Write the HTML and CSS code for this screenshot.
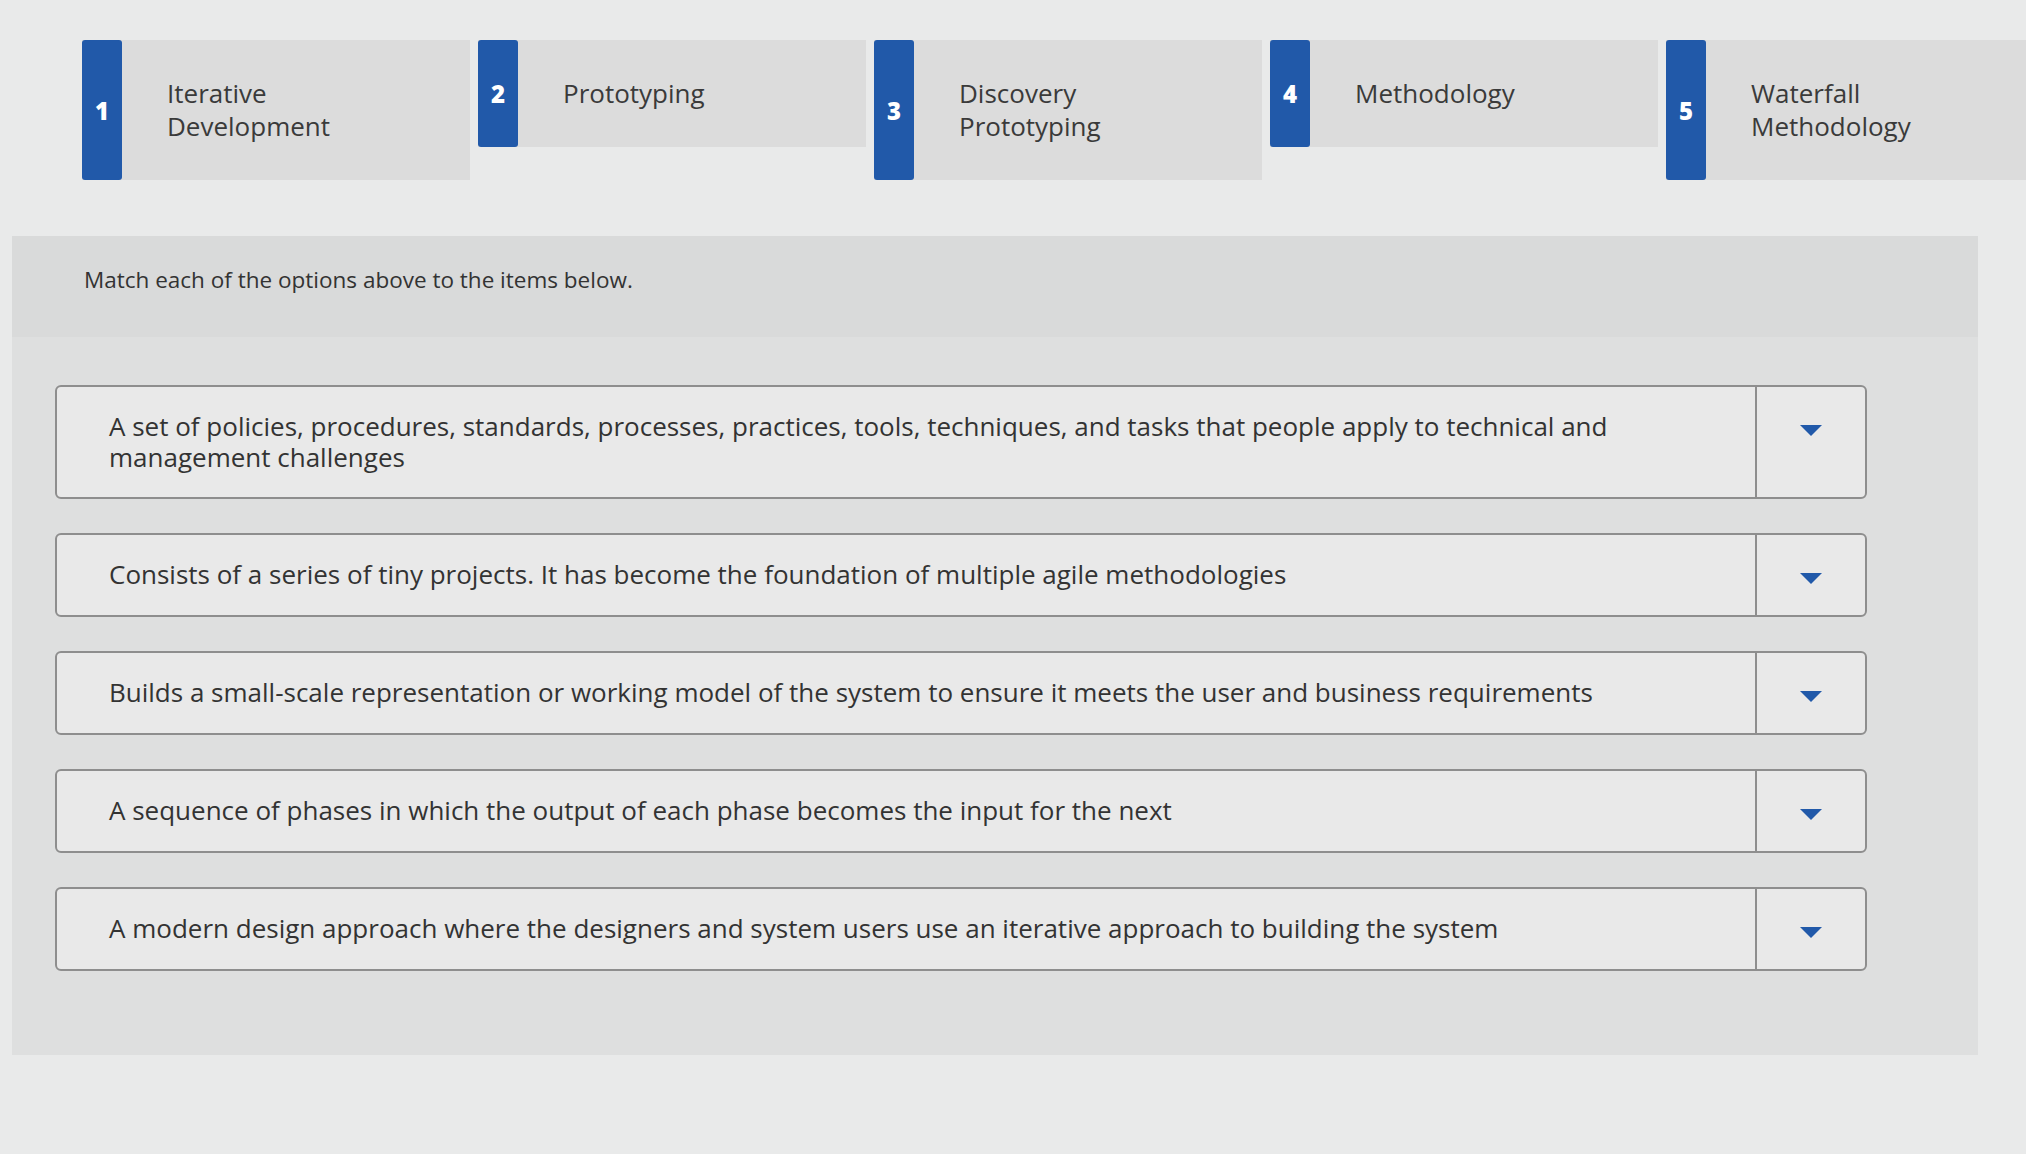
FILE: index.html
```html
<!DOCTYPE html>
<html lang="en">
<head>
    <meta charset="UTF-8">
    <meta name="viewport" content="width=device-width, initial-scale=1.0">
    <title>Matching Question</title>
    <link rel="stylesheet" href="styles.css">
</head>
<body>
    <div class="options">
        <div class="option">
            <span class="option-num">1</span>
            <span class="option-label">Iterative<br>Development</span>
        </div>
        <div class="option">
            <span class="option-num">2</span>
            <span class="option-label">Prototyping</span>
        </div>
        <div class="option">
            <span class="option-num">3</span>
            <span class="option-label">Discovery<br>Prototyping</span>
        </div>
        <div class="option">
            <span class="option-num">4</span>
            <span class="option-label">Methodology</span>
        </div>
        <div class="option">
            <span class="option-num">5</span>
            <span class="option-label">Waterfall<br>Methodology</span>
        </div>
    </div>

    <div class="question">
        <div class="question-header">
            <p class="prompt">Match each of the options above to the items below.</p>
        </div>

        <ul class="match-list">
            <li class="match-row">
                <div class="match-text">A set of policies, procedures, standards, processes, practices, tools, techniques, and tasks that people apply to technical and management challenges</div>
                <button class="match-select" aria-label="Choose option"><span class="caret"></span></button>
            </li>
            <li class="match-row">
                <div class="match-text">Consists of a series of tiny projects. It has become the foundation of multiple agile methodologies</div>
                <button class="match-select" aria-label="Choose option"><span class="caret"></span></button>
            </li>
            <li class="match-row">
                <div class="match-text">Builds a small-scale representation or working model of the system to ensure it meets the user and business requirements</div>
                <button class="match-select" aria-label="Choose option"><span class="caret"></span></button>
            </li>
            <li class="match-row">
                <div class="match-text">A sequence of phases in which the output of each phase becomes the input for the next</div>
                <button class="match-select" aria-label="Choose option"><span class="caret"></span></button>
            </li>
            <li class="match-row">
                <div class="match-text">A modern design approach where the designers and system users use an iterative approach to building the system</div>
                <button class="match-select" aria-label="Choose option"><span class="caret"></span></button>
            </li>
        </ul>
    </div>
</body>
</html>
```

FILE: styles.css
```css
body {
    font-family: "Open Sans", Lato, Arial, sans-serif;
    background-color: #e9eaea;
    color: #333;
    margin: 0;
    overflow: hidden;
    height: 100vh;
}

/* draggable answer cards */
.options {
    display: flex;
    gap: 8px;
    padding: 40px 0 0 82px;
    align-items: flex-start;
    white-space: nowrap;
}

.option {
    flex: 0 0 388px;
    display: flex;
    align-items: stretch;
    background: #dcdcdc;
    min-height: 106px;
}

.option-num {
    flex: 0 0 40px;
    display: flex;
    align-items: center;
    justify-content: center;
    background: #2159a9;
    color: white;
    font-weight: 800;
    font-size: 24px;
    border-radius: 3px;
}

.option-label {
    align-self: center;
    padding: 37px 20px 37px 45px;
    font-size: 26px;
    line-height: 33px;
    color: #3a3a3a;
}

/* question panel */
.question {
    margin: 56px 48px 0 12px;
    background: #dedfdf;
    padding-bottom: 84px;
}

.question-header {
    background: #d9dada;
    padding: 28px 0 42px 72px;
}

.prompt {
    margin: 0;
    font-size: 22.5px;
    color: #333;
}

.match-list {
    list-style: none;
    margin: 48px 0 0 43px;
    padding: 0;
    width: 1812px;
}

.match-row {
    display: flex;
    background: #e9e9e9;
    border: 2px solid #8e8e8e;
    border-radius: 6px;
    margin-bottom: 34px;
    min-height: 80px;
}

.match-row:last-child {
    margin-bottom: 0;
}

.match-text {
    flex: 1;
    padding: 24px 40px 24px 52px;
    font-size: 26px;
    line-height: 31px;
    color: #333;
}

.match-select {
    flex: 0 0 110px;
    border: none;
    border-left: 2px solid #8e8e8e;
    background: transparent;
    display: flex;
    justify-content: center;
    padding-top: 38px;
    cursor: pointer;
}

.caret {
    width: 0;
    height: 0;
    border-left: 11px solid transparent;
    border-right: 11px solid transparent;
    border-top: 11px solid #2159a9;
}
```
